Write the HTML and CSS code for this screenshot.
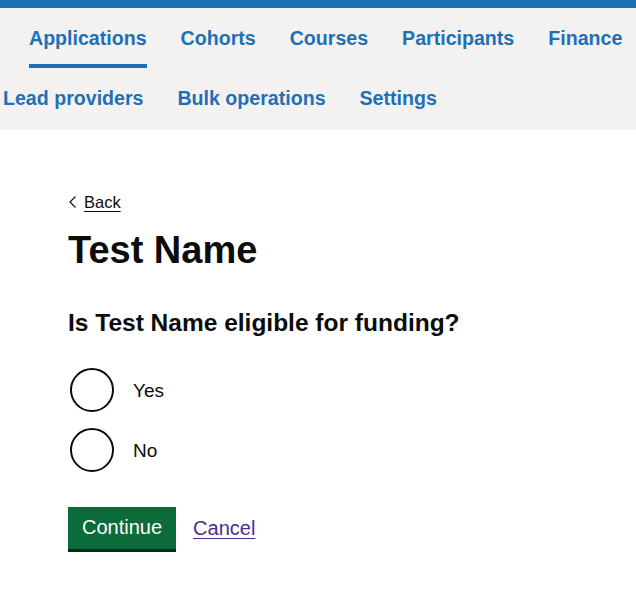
FILE: index.html
```html
<!DOCTYPE html>
<html lang="en">
<head>
<meta charset="utf-8">
<title>Test Name</title>
<link rel="stylesheet" href="styles.css">
</head>
<body>
<header class="topbar"></header>
<nav class="subnav">
  <ul class="subnav-list">
    <li class="subnav-item first"><a class="subnav-link active" href="#">Applications</a></li>
    <li class="subnav-item"><a class="subnav-link" href="#">Cohorts</a></li>
    <li class="subnav-item"><a class="subnav-link" href="#">Courses</a></li>
    <li class="subnav-item"><a class="subnav-link" href="#">Participants</a></li>
    <li class="subnav-item"><a class="subnav-link" href="#">Finance</a></li>
    <li class="subnav-item"><a class="subnav-link" href="#">Lead providers</a></li>
    <li class="subnav-item"><a class="subnav-link" href="#">Bulk operations</a></li>
    <li class="subnav-item"><a class="subnav-link" href="#">Settings</a></li>
  </ul>
</nav>
<main class="main">
  <a class="back-link" href="#">
    <svg class="back-chevron" width="9" height="14" viewBox="0 0 9 14" aria-hidden="true"><polyline points="7.5,1.5 2,7 7.5,12.5" fill="none" stroke="#0b0c0c" stroke-width="1.2"/></svg>
    <span class="back-text">Back</span>
  </a>
  <h1 class="heading">Test Name</h1>
  <form class="form">
    <fieldset class="fieldset">
      <legend class="legend">Is Test Name eligible for funding?</legend>
      <div class="radios">
        <label class="radio"><span class="radio-circle"></span><span class="radio-label">Yes</span></label>
        <label class="radio"><span class="radio-circle"></span><span class="radio-label">No</span></label>
      </div>
    </fieldset>
    <div class="actions">
      <button type="button" class="button">Continue</button>
      <a class="cancel" href="#">Cancel</a>
    </div>
  </form>
</main>
</body>
</html>
```
FILE: styles.css
```css
* { box-sizing: border-box; }
html, body { margin: 0; padding: 0; background: #ffffff; }
body {
  font-family: "Liberation Sans", Arial, sans-serif;
  color: #0b0c0c;
}
.topbar {
  height: 8px;
  background: #1d70b8;
}
.subnav {
  background: #f3f2f1;
  padding-bottom: 2px;
}
.subnav-list {
  list-style: none;
  margin: 0;
  padding: 0 0 0 3px;
  display: flex;
  flex-wrap: wrap;
  column-gap: 34px;
}
.subnav-item.first { margin-left: 26px; }
.subnav-link {
  display: block;
  padding: 18px 0 13px;
  line-height: 25px;
  font-size: 19.6px;
  font-weight: 700;
  color: #1d70b8;
  text-decoration: none;
  border-bottom: 4px solid transparent;
}
.subnav-link.active { border-bottom-color: #1d70b8; }
.main {
  padding: 62px 20px 40px 68px;
}
.back-link {
  display: inline-flex;
  align-items: center;
  gap: 7px;
  font-size: 16.5px;
  line-height: 20px;
  color: #0b0c0c;
  text-decoration: none;
}
.back-chevron { display: block; }
.back-text {
  text-decoration: underline;
  text-underline-offset: 3px;
  text-decoration-thickness: 1px;
}
.heading {
  margin: 15px 0 0;
  font-size: 38px;
  line-height: 45px;
  font-weight: 700;
}
.form { margin: 35px 0 0; }
.fieldset { border: 0; margin: 0; padding: 0; }
.legend {
  padding: 0;
  font-size: 24.5px;
  line-height: 30px;
  font-weight: 700;
}
.radios {
  margin-top: 30px;
  display: flex;
  flex-direction: column;
  gap: 16px;
}
.radio {
  display: flex;
  align-items: center;
  gap: 19px;
  margin-left: 2px;
}
.radio-circle {
  width: 44px;
  height: 44px;
  border: 2px solid #0b0c0c;
  border-radius: 50%;
  background: #fff;
  flex: none;
}
.radio-label {
  font-size: 19px;
  line-height: 25px;
}
.actions {
  margin-top: 35px;
  display: flex;
  align-items: center;
  gap: 17px;
}
.button {
  font-family: "Liberation Sans", Arial, sans-serif;
  font-size: 20px;
  line-height: 25px;
  color: #ffffff;
  background: #0b6b3a;
  border: 0;
  border-radius: 0;
  padding: 8px 14px 9px;
  margin: 0 0 3px;
  box-shadow: 0 3px 0 #002d18;
}
.cancel {
  font-size: 20px;
  line-height: 25px;
  color: #4c2c92;
  text-decoration: underline;
  text-underline-offset: 3px;
  text-decoration-thickness: 1px;
  margin-bottom: 3px;
}
```
